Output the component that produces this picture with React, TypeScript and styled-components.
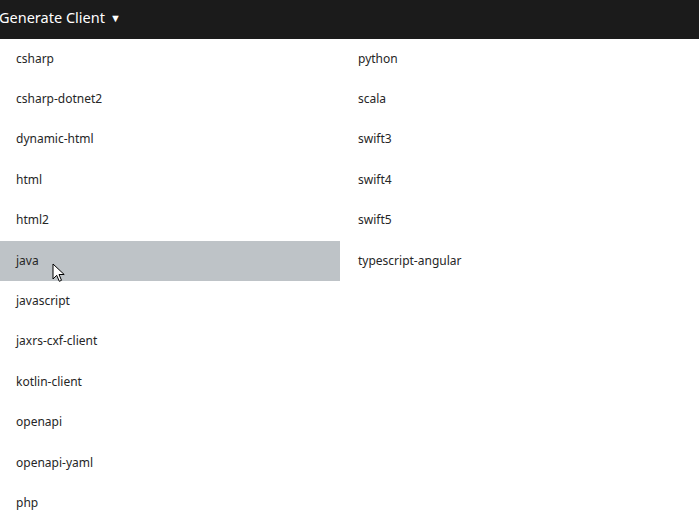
import styled, { createGlobalStyle } from 'styled-components';

const GlobalStyle = createGlobalStyle`
  html, body {
    margin: 0;
    padding: 0;
    background: #ffffff;
    font-family: "Noto Sans", "Open Sans", sans-serif;
  }
`;

const languages = [
    'csharp',
    'csharp-dotnet2',
    'dynamic-html',
    'html',
    'html2',
    'java',
    'javascript',
    'jaxrs-cxf-client',
    'kotlin-client',
    'openapi',
    'openapi-yaml',
    'php',
    'python',
    'scala',
    'swift3',
    'swift4',
    'swift5',
    'typescript-angular',
];

const Toolbar = styled.div`
  height: 39px;
  background: #1b1b1b;
  color: #ffffff;
  box-sizing: border-box;
  padding: 6px 0 0 0;
  font-size: 14.5px;
  display: flex;
  align-items: flex-start;
`;

const MenuTitle = styled.span`
  display: flex;
  align-items: center;
  gap: 5px;
  margin-left: -1px;
  line-height: 20px;
`;

const Caret = styled.span`
  font-size: 11px;
  line-height: 20px;
  padding-top: 2px;
`;

const List = styled.ul`
  list-style: none;
  margin: 0;
  padding: 0;
  display: grid;
  grid-template-columns: 340px 340px;
  grid-template-rows: repeat(12, 40.4px);
  grid-auto-flow: column;
`;

const Item = styled.li<{ $active?: boolean }>`
  position: relative;
  display: flex;
  align-items: center;
  box-sizing: border-box;
  padding: 0 0 2px 16px;
  font-size: 12px;
  color: #262626;
  background: ${(p) => (p.$active ? '#bec3c7' : 'transparent')};
`;

const RightItem = styled(Item)`
  padding-left: 18px;
`;

const Pointer = styled.svg`
  position: absolute;
  left: 52px;
  top: 22px;
`;

const Cursor = () => (
    <Pointer width="15" height="20" viewBox="0 0 15 20">
        <path
            d="M1 1 L1 16 L4.7 12.3 L7.3 18.3 L9.5 17.3 L7 11.5 L12.2 11.5 Z"
            fill="#ffffff"
            stroke="#000000"
            strokeWidth="1"
            strokeLinejoin="miter"
        />
    </Pointer>
);

const App = () => {
    return (
        <>
            <GlobalStyle />
            <Toolbar>
                <MenuTitle>
                    Generate Client <Caret>▼</Caret>
                </MenuTitle>
            </Toolbar>
            <List>
                {languages.map((lang, i) => {
                    const active = lang === 'java';
                    const Row = i < 12 ? Item : RightItem;
                    return (
                        <Row key={lang} $active={active}>
                            {lang}
                            {active && <Cursor />}
                        </Row>
                    );
                })}
            </List>
        </>
    );
};

export default App;
